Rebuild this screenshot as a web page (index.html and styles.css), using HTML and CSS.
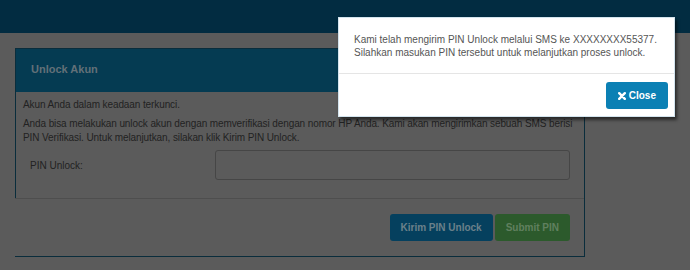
FILE: index.html
```html
<!DOCTYPE html>
<html lang="id">
<head>
  <meta charset="UTF-8">
  <meta name="viewport" content="width=device-width, initial-scale=1.0">
  <title>Unlock Akun</title>
  <link rel="stylesheet" href="styles.css">
</head>
<body>

  <header class="topbar"></header>

  <!-- page behind the modal, drawn in its dimmed colours -->
  <main class="page">
    <section class="panel">
      <div class="panel-heading">Unlock Akun</div>
      <div class="panel-body">
        <p>Akun Anda dalam keadaan terkunci.</p>
        <p>Anda bisa melakukan unlock akun dengan memverifikasi dengan nomor HP Anda. Kami akan mengirimkan sebuah SMS berisi PIN Verifikasi. Untuk melanjutkan, silakan klik Kirim PIN Unlock.</p>
        <div class="form-row">
          <label for="pin">PIN Unlock:</label>
          <input id="pin" type="text">
        </div>
      </div>
      <div class="panel-footer">
        <button class="btn btn-blue" type="button">Kirim PIN Unlock</button>
        <button class="btn btn-green" type="button">Submit PIN</button>
      </div>
    </section>
  </main>

  <!-- Modal -->
  <div class="modal">
    <div class="modal-body">
      Kami telah mengirim PIN Unlock melalui SMS ke XXXXXXXX55377.<br>
      Silahkan masukan PIN tersebut untuk melanjutkan proses unlock.
    </div>
    <div class="modal-footer">
      <button class="btn btn-close" type="button">
        <svg class="icon" viewBox="0 0 8 8" width="8" height="8"><path d="M1.2 1.2 L6.8 6.8 M6.8 1.2 L1.2 6.8" stroke="#fff" stroke-width="2.4" stroke-linecap="round"/></svg>
        Close
      </button>
    </div>
  </div>

</body>
</html>
```

FILE: styles.css
```css
body {
  margin: 0;
  font-family: "Liberation Sans", Arial, sans-serif;
  font-size: 10px;
  color: #222;
  background: #5b5b5b;
}
.topbar {
  height: 33px;
  background: #022c41;
}
.page {
  padding: 15px;
}
.panel {
  width: 570px;
  box-sizing: border-box;
  border: 1px solid #0a2d3c;
  border-left: none;
}
.panel-heading {
  padding: 12px 15px 15px;
  border-left: 1px solid #0a2d3c;
  line-height: 16px;
  font-size: 11px;
  font-weight: bold;
  color: #627078;
  background: #053b52;
}
.panel-body {
  padding: 6px 8px 18px 7px;
  border-left: 1px solid #0a2d3c;
}
.panel-body p {
  margin: 0 0 5px;
  line-height: 14px;
  letter-spacing: -0.1px;
}
.form-row {
  display: grid;
  grid-template-columns: 192px 1fr;
  align-items: center;
  margin: 3px 6px 0 0;
}
.form-row label {
  padding-left: 7px;
}
.form-row input {
  height: 30px;
  box-sizing: border-box;
  border: 1px solid #464646;
  border-radius: 3px;
  background: transparent;
}
.panel-footer {
  display: flex;
  justify-content: flex-end;
  gap: 2px;
  padding: 15px 14px 15px;
  border-top: 1px solid #4e4e4e;
}
.btn {
  height: 27px;
  padding: 0 11px;
  border: none;
  border-radius: 3px;
  font-family: inherit;
  font-size: 10px;
  font-weight: bold;
  cursor: pointer;
}
.btn-blue { background: #05405e; color: #6b808a; }
.btn-green { background: #2c5a2c; color: #60805f; }

.modal {
  position: absolute;
  top: 17px;
  left: 338px;
  width: 337px;
  box-sizing: border-box;
  background: #fff;
  border: 1px solid #d3e4ee;
  box-shadow: 2px 3px 3px rgba(0,0,0,0.55);
  color: #555;
}
.modal-body {
  padding: 15px 15px 14px;
  line-height: 13px;
}
.modal-footer {
  display: flex;
  justify-content: flex-end;
  padding: 8px 6px 7px;
  border-top: 1px solid #e5e5e5;
}
.btn-close {
  display: flex;
  align-items: center;
  gap: 3px;
  padding: 0 12px;
  background: #0b80b4;
  color: #fff;
}
```
